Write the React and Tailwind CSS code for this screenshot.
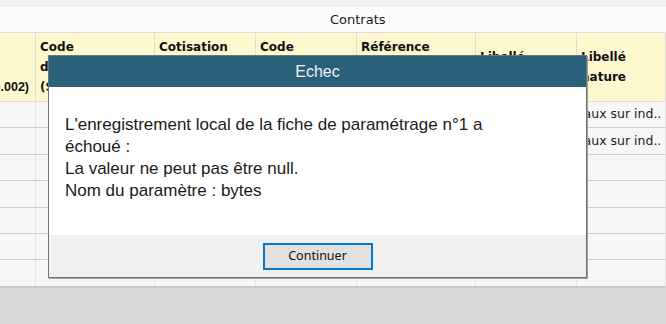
const headers = [
  { lines: ['(S21.G00.40.002)'], right: true },
  { lines: ['Code', 'du contrat', '(S21.G00.40.009)'] },
  { lines: ['Cotisation', 'individuelle', '(S21.G00.81)'] },
  { lines: ['Code', 'organisme', '(S21.G00.81.002)'] },
  { lines: ['Référence', 'du contrat', '(S21.G00.15)'] },
  { lines: ['Libellé', 'cotisation'] },
  { lines: ['Libellé', 'nature'] },
];

const rows = [
  { h: 'h-[26px]', text: 'Taux sur ind..' },
  { h: 'h-[27px]', text: 'Taux sur ind..' },
  { h: 'h-[26px]', text: '' },
  { h: 'h-[27px]', text: '' },
  { h: 'h-[26px]', text: '' },
  { h: 'h-[26px]', text: '' },
  { h: 'h-[26px]', text: '' },
];

const cols = 'grid grid-cols-[36px_119px_101px_101px_119px_101px_1fr]';

const App = () => {
  return (
    <div className="relative w-[666px] h-[324px] overflow-hidden bg-[#d9d9d9] font-['DejaVu_Sans',sans-serif]">
      {/* Top strip */}
      <div className="h-[7px] bg-[#f0f0f0]" />

      {/* Title band */}
      <div className="h-[26px] bg-[#fcfcfc] border-b border-[#dcdcdc] flex items-center pl-[330px] text-[13px] text-[#1a1a1a]">
        Contrats
      </div>

      {/* Table header */}
      <div className={`${cols} h-[69px] bg-[#fdf8cd] border-b border-[#dedede]`}>
        {headers.map((h, i) => (
          <div
            key={i}
            className={`flex flex-col justify-center overflow-hidden border-r border-[#dcdcdc] font-bold text-[#111] leading-[20px] whitespace-nowrap ${h.right ? "items-end pr-[6px] pt-[40px] text-[12.5px] font-['Liberation_Sans',sans-serif]" : 'pl-[4px] text-[12px]'}`}
          >
            {h.lines.map((l, j) => (
              <span key={j}>{l}</span>
            ))}
          </div>
        ))}
      </div>

      {/* Table body */}
      <div className="bg-[#f7f7f7] border-b-2 border-[#c9c9c9]">
        {rows.map((r, i) => (
          <div key={i} className={`${cols} ${r.h} border-b border-[#cdcdcd] last:border-b-0`}>
            {headers.map((_, j) => (
              <div
                key={j}
                className="flex items-center overflow-hidden whitespace-nowrap border-r border-[#e4e4e4] pl-[1px] text-[12.5px] text-[#1a1a1a]"
              >
                {j === 6 ? r.text : ''}
              </div>
            ))}
          </div>
        ))}
      </div>

      {/* Error dialog */}
      <div className="absolute left-[48px] top-[55px] w-[539px] h-[223px] flex flex-col border border-[#737373] bg-white shadow-[1px_1px_0_#a0a0a0]">
        <div className="h-[31px] bg-[#2a6079] flex items-center justify-center text-[16px] text-[#f2f2f2] font-['Liberation_Sans',sans-serif]">
          Echec
        </div>
        <div className="flex-1 bg-white pl-[16px] pt-[27px] text-[17px] leading-[22px] text-[#1a1a1a] font-['Liberation_Sans',sans-serif]">
          <p>L'enregistrement local de la fiche de paramétrage n°1 a</p>
          <p>échoué :</p>
          <p>La valeur ne peut pas être null.</p>
          <p>Nom du paramètre : bytes</p>
        </div>
        <div className="h-[42px] bg-[#f0f0f0] flex items-center justify-center">
          <button className="w-[110px] h-[27px] bg-[#e1e1e1] border-2 border-[#0078d7] text-[12.5px] text-[#111] font-['Noto_Sans',sans-serif] leading-none">
            Continuer
          </button>
        </div>
      </div>
    </div>
  );
};

export default App;
